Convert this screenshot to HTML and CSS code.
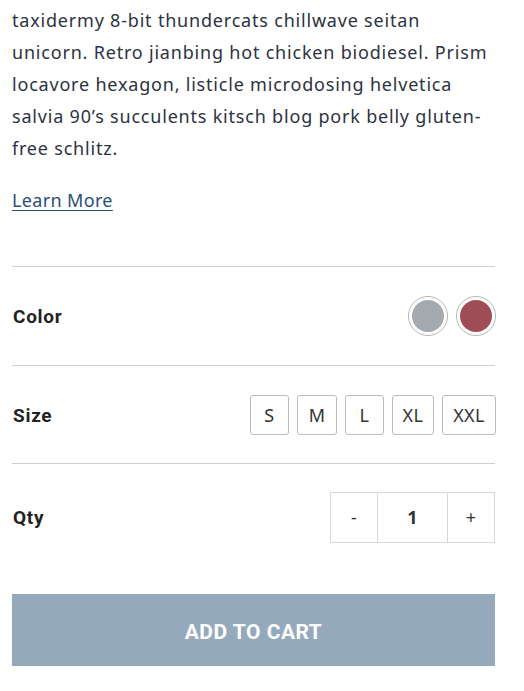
FILE: index.html
```html
<!DOCTYPE html>
<html>
<head>
<meta charset="utf-8">
<link rel="stylesheet" href="styles.css">
</head>
<body>
<div class="product">
  <p class="desc">taxidermy 8-bit thundercats chillwave seitan unicorn. Retro jianbing hot chicken biodiesel. Prism locavore hexagon, listicle microdosing helvetica salvia 90’s succulents kitsch blog pork belly gluten-free schlitz.</p>
  <a class="learn" href="#">Learn More</a>
  <div class="option first">
    <span class="label">Color</span>
    <div class="swatches">
      <span class="swatch"><span class="dot gray"></span></span>
      <span class="swatch"><span class="dot red"></span></span>
    </div>
  </div>
  <div class="option">
    <span class="label">Size</span>
    <div class="sizes">
      <span class="size s-s">S</span>
      <span class="size s-m">M</span>
      <span class="size s-l">L</span>
      <span class="size s-xl">XL</span>
      <span class="size s-xxl">XXL</span>
    </div>
  </div>
  <div class="option qty-row">
    <span class="label">Qty</span>
    <div class="qty">
      <span class="q-btn">-</span>
      <span class="q-val">1</span>
      <span class="q-btn">+</span>
    </div>
  </div>
  <button class="cart">ADD TO CART</button>
</div>
</body>
</html>
```
FILE: styles.css
```css
html, body { margin: 0; padding: 0; background: #fff; }
.product {
  width: 483px;
  margin-left: 12px;
  font-family: "Noto Sans", sans-serif;
  color: #2d3340;
}
.desc {
  margin: 0;
  padding-top: 4px;
  font-size: 18px;
  letter-spacing: 0.8px;
  line-height: 32px;
}
.learn {
  display: inline-block;
  margin-top: 24px;
  font-size: 18px;
  letter-spacing: 0.35px;
  line-height: 24px;
  color: #2a4e78;
  text-decoration: underline;
  text-underline-offset: 3px;
}
.option {
  display: flex;
  justify-content: space-between;
  align-items: center;
  border-top: 1px solid #cfcfcf;
  height: 98px;
}
.option.first { margin-top: 54px; }
.label {
  padding-left: 1px;
  font-family: Roboto, sans-serif;
  font-weight: 700;
  font-size: 19px;
  color: #222;
  letter-spacing: 0.7px;
}
.swatches { display: flex; gap: 8px; margin-right: -1px; }
.swatch {
  width: 38px; height: 38px;
  border: 1px solid #b5b5b5;
  border-radius: 50%;
  display: flex; align-items: center; justify-content: center;
}
.dot { width: 32px; height: 32px; border-radius: 50%; }
.dot.gray { background: #a5aaaf; }
.dot.red { background: #a04c56; }
.sizes { display: flex; gap: 8px; margin-right: -1px; }
.size {
  box-sizing: border-box;
  height: 40px;
  border: 1px solid #bcbcbc;
  border-radius: 3px;
  display: flex; align-items: center; justify-content: center;
  font-size: 18px;
  letter-spacing: 0.4px;
  color: #333;
}
.s-s { width: 39px; }
.s-m { width: 40px; }
.s-l { width: 39px; }
.s-xl { width: 42px; }
.s-xxl { width: 54px; }
.qty-row { height: 106px; margin-top: -1px; }
.qty {
  display: flex;
  border: 1px solid #d8d8d8;
  height: 49px;
}
.q-btn, .q-val {
  box-sizing: border-box;
  display: flex; align-items: center; justify-content: center;
  font-size: 18px;
  color: #333;
}
.q-btn { width: 46px; }
.q-val { width: 71px; border-left: 1px solid #d8d8d8; border-right: 1px solid #d8d8d8; font-weight: 700; }
.cart {
  display: block;
  width: 483px;
  height: 72px;
  margin-top: 24px;
  padding: 4px 0 0;
  border: none;
  background: #95a9bd;
  color: #fff;
  font-family: Roboto, sans-serif;
  font-weight: 700;
  font-size: 21px;
  letter-spacing: 0.5px;
}
```
